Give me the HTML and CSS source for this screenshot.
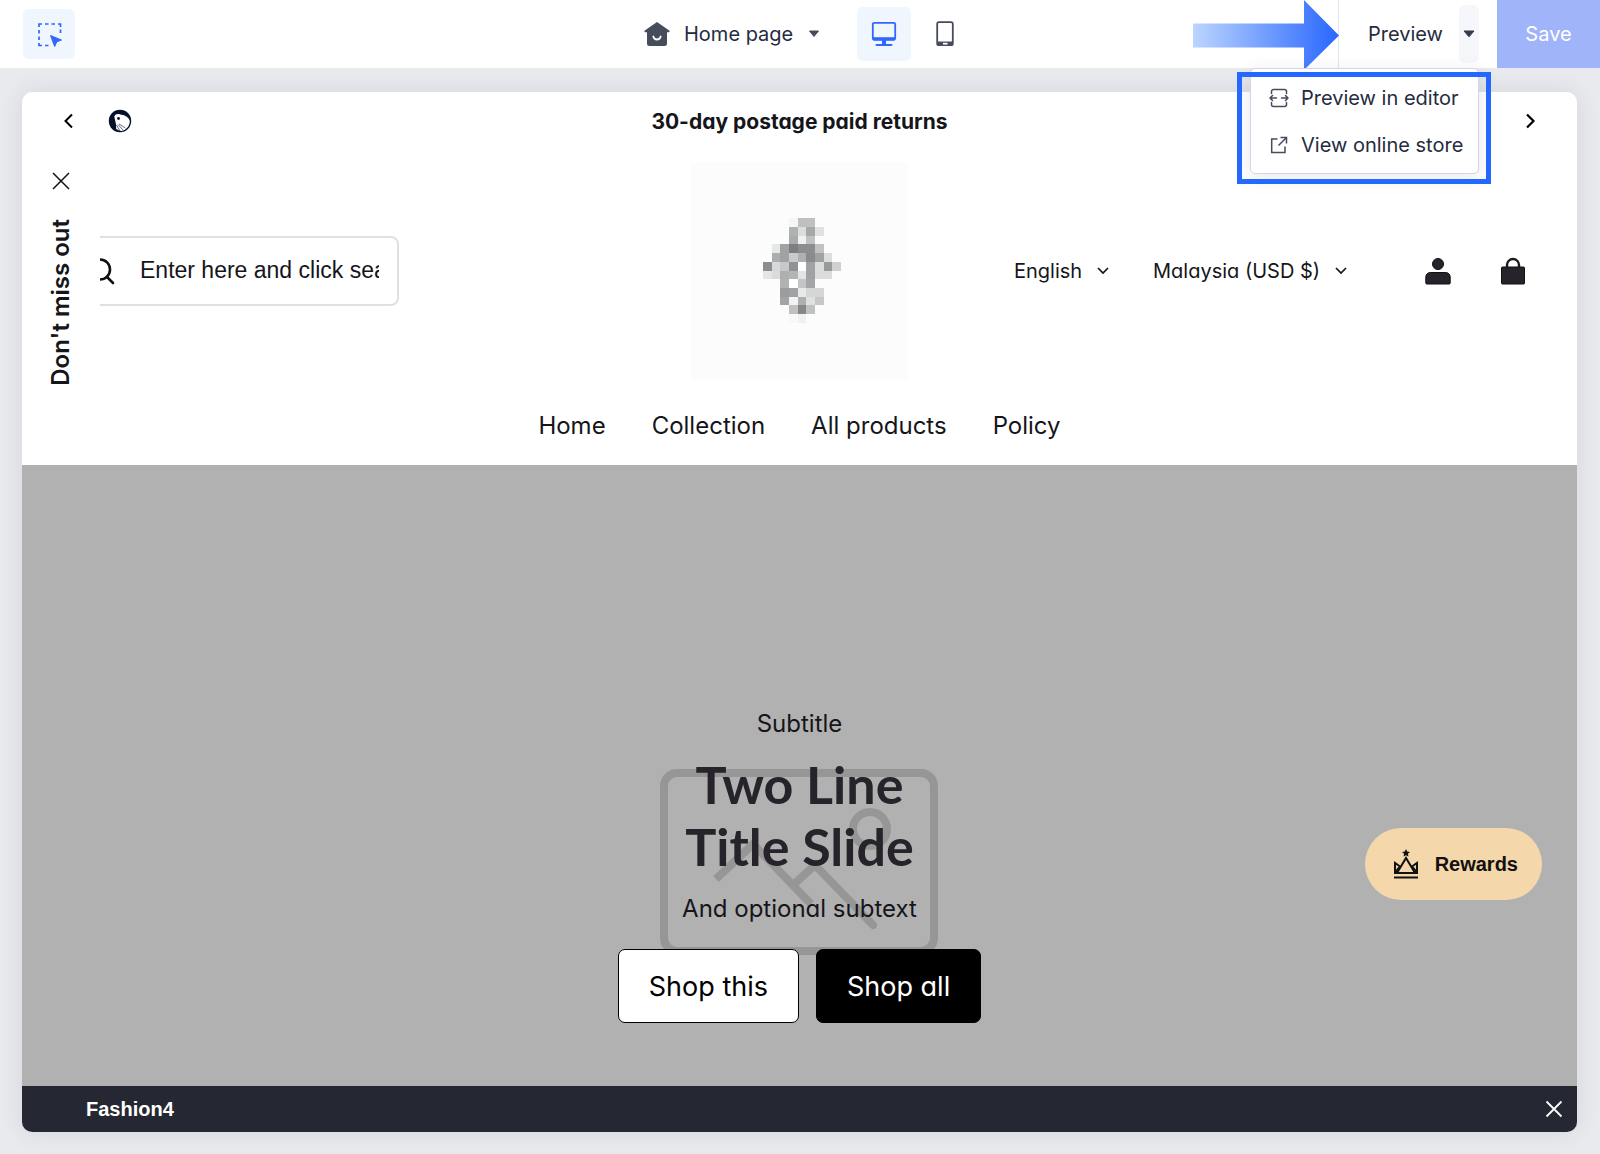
FILE: index.html
```html
<!DOCTYPE html>
<html lang="en">
<head>
<meta charset="utf-8">
<meta name="viewport" content="width=device-width, initial-scale=1">
<title>Theme editor</title>
<link rel="stylesheet" href="styles.css">
</head>
<body>
<header class="topbar">
  <div class="topbar-start">
    <button class="tool-button" type="button" aria-label="Select element">
      <svg width="25" height="25" viewBox="0 0 25 25" fill="none"><path d="M2 5V2h3M8 2h3.500M14.500 2H18M21 2h2.500v3M23.500 7.500V11M2 8v3.500M2 14.500V18M2 21v2.500h3M8 23.500h3.500" stroke="#3366ff" stroke-width="1.700"/><path d="M13.500 13.500l11 4.500-4.700 1.800L17.700 24.500z" fill="#3366ff" stroke="#3366ff" stroke-linejoin="round"/></svg>
    </button>
  </div>
  <div class="topbar-center">
    <label class="page-picker">
      <svg width="26" height="26" viewBox="0 0 26 26"><path d="M13 1L.8 9.500c-.8.800-.3 1.800.8 1.800H3V22.500A2.500 2.500 0 0 0 5.500 25h15a2.500 2.500 0 0 0 2.500-2.500V11.300h1.400c1.100 0 1.600-1 .8-1.800z" fill="#474c5c"/><path d="M9.300 15.500c1 4 6.400 4 7.400 0" fill="none" stroke="#fff" stroke-width="1.800" stroke-linecap="round"/></svg>
      <select class="page-select" aria-label="Page"><option>Home page</option></select>
      <svg class="caret" width="12" height="8" viewBox="0 0 12 8"><path d="M1.500 1h9L6 6.500z" fill="#474c5c" stroke="#474c5c" stroke-linejoin="round"/></svg>
    </label>
    <div class="devices">
      <button class="device-button device-active" type="button" aria-label="Desktop view">
        <svg width="26" height="26" viewBox="0 0 26 26" fill="none" stroke="#3366ff"><rect x="1.800" y="1.800" width="22.400" height="17" rx="1.500" stroke-width="1.800"/><path d="M2 17.700h22" stroke-width="3"/><path d="M13 18v6" stroke-width="4"/><path d="M5.500 24h15" stroke-width="2" stroke-linecap="round"/></svg>
      </button>
      <button class="device-button" type="button" aria-label="Mobile view">
        <svg width="18" height="26" viewBox="0 0 18 26" fill="none" stroke="#474c5c"><rect x="1.200" y="1.200" width="15.600" height="23" rx="1.800" stroke-width="1.800"/><path d="M1.500 22.500h15" stroke-width="4"/><path d="M7 22.700h4.500" stroke="#fff" stroke-width="1.800"/></svg>
      </button>
    </div>
  </div>
  <div class="topbar-end">
    <div class="preview-group">
      <button class="preview-button" type="button">Preview</button>
      <button class="preview-toggle" type="button" aria-label="Preview options" aria-expanded="true">
        <svg width="12" height="8" viewBox="0 0 12 8"><path d="M1 1h10L6 6.800z" fill="#333a4d" stroke="#333a4d" stroke-linejoin="round"/></svg>
      </button>
      <div class="preview-menu">
        <button class="menu-item" type="button">
          <svg width="20" height="20" viewBox="0 0 20 20" fill="none" stroke="#474c5c" stroke-width="1.500" stroke-linecap="round" stroke-linejoin="round"><path d="M2.500 5.500V3.500a2 2 0 0 1 2-2h11a2 2 0 0 1 2 2v2M2.500 14.500v2a2 2 0 0 0 2 2h11a2 2 0 0 0 2-2v-2M7.500 10H1M3.500 7.500L1 10l2.500 2.500M12.500 10H19M16.500 7.500L19 10l-2.500 2.500"/></svg>
          Preview in editor
        </button>
        <a class="menu-item" href="#store">
          <svg width="20" height="20" viewBox="0 0 20 20" fill="none" stroke="#474c5c" stroke-width="1.500"><path d="M8.500 4H2.700v13.500H16V11.500M9.500 10.500L17 3M11.500 2.500H17.500v6"/></svg>
          View online store
        </a>
        <div class="highlight"></div>
      </div>
      <svg class="arrow" width="146" height="70" viewBox="0 0 146 70"><defs><linearGradient id="arrow-fill"><stop offset="0" stop-color="#bcd4ff"/><stop offset="1" stop-color="#2867ff"/></linearGradient></defs><path d="M0 23.500h111V0l35 35.500L111 70V47.500H0z" fill="url(#arrow-fill)"/></svg>
    </div>
    <button class="save-button" type="button">Save</button>
  </div>
</header>

<main class="canvas">
  <div class="frame">
    <div class="announcement">
      <div class="announcement-start">
        <button class="icon-button" type="button" aria-label="Previous message"><svg width="12" height="18" viewBox="0 0 12 18" fill="none" stroke="#000" stroke-width="2"><path d="M10 2.500L3.500 9l6.500 6.500"/></svg></button>
        <svg width="24" height="24" viewBox="0 0 24 24"><circle cx="12" cy="12" r="11.200" fill="#06102a"/><path d="M6.300 7.500C7 4.600 11 4.400 13.500 5.800c3.500.2 6.800 2.400 8.200 5.500.6 5.500-3.200 9.700-8.200 10.700-2-.2-4-1-5.500-2.200.8-3.800-.8-7-1.700-12.300z" fill="#fff"/><circle cx="10.500" cy="9.500" r="1.400" fill="#06102a"/><path d="M8.500 16l3.500 6M10 15.500l5 5.500M11 15l6.500 4" stroke="#06102a" stroke-width=".6"/></svg>
      </div>
      <p class="announcement-text">30-day postage paid returns</p>
      <div class="announcement-end">
        <button class="icon-button" type="button" aria-label="Next message"><svg width="12" height="18" viewBox="0 0 12 18" fill="none" stroke="#000" stroke-width="2.200"><path d="M2 2.500L8.500 9 2 15.500"/></svg></button>
      </div>
    </div>

    <div class="store-header">
      <label class="search">
        <svg width="40" height="28" viewBox="0 0 40 28" fill="none" stroke="#101014" stroke-width="2.600" stroke-linecap="round"><circle cx="24" cy="12.500" r="10"/><path d="M31 20l6 6"/></svg>
        <input class="search-input" type="text" value="Enter here and click search" aria-label="Search">
      </label>
      <svg class="logo" width="217" height="217" viewBox="0 0 25 25" shape-rendering="crispEdges" role="img" aria-label="Store logo">
        <rect width="25" height="25" fill="#fcfcfc"/>
        <g transform="translate(8.300 6.500)">
          <rect x="3" y="0" width="1" height="1" fill="#f6f6f6"/><rect x="4" y="0" width="2" height="1" fill="#bfc0c0"/>
          <rect x="3" y="1" width="1" height="1" fill="#b0b2b2"/><rect x="4" y="1" width="1" height="1" fill="#dcdddd"/><rect x="5" y="1" width="1" height="1" fill="#a6a8a8"/><rect x="6" y="1" width="1" height="1" fill="#e0e1e1"/>
          <rect x="3" y="2" width="1" height="1" fill="#aaacac"/><rect x="4" y="2" width="1" height="1" fill="#f0f0f0"/><rect x="5" y="2" width="1" height="1" fill="#c0c2c2"/>
          <rect x="1" y="3" width="1" height="1" fill="#e6e7e7"/><rect x="2" y="3" width="1" height="1" fill="#a0a3a5"/><rect x="3" y="3" width="1" height="1" fill="#7b7f80"/><rect x="4" y="3" width="2" height="1" fill="#8b8d8e"/><rect x="6" y="3" width="1" height="1" fill="#c0c2c3"/>
          <rect x="1" y="4" width="1" height="1" fill="#abadae"/><rect x="2" y="4" width="1" height="1" fill="#a0a2a4"/><rect x="3" y="4" width="1" height="1" fill="#c8cacb"/><rect x="4" y="4" width="1" height="1" fill="#aeb0b1"/><rect x="5" y="4" width="1" height="1" fill="#898c8e"/><rect x="6" y="4" width="1" height="1" fill="#a0a2a3"/><rect x="7" y="4" width="1" height="1" fill="#dcdddd"/>
          <rect x="0" y="5" width="1" height="1" fill="#8b8e90"/><rect x="1" y="5" width="1" height="1" fill="#d8dad9"/><rect x="2" y="5" width="1" height="1" fill="#c6c8ca"/><rect x="3" y="5" width="1" height="1" fill="#909295"/><rect x="4" y="5" width="1" height="1" fill="#fff"/><rect x="5" y="5" width="1" height="1" fill="#a0a2a4"/><rect x="6" y="5" width="1" height="1" fill="#dcdddd"/><rect x="7" y="5" width="1" height="1" fill="#989a9c"/><rect x="8" y="5" width="1" height="1" fill="#cfd0d2"/>
          <rect x="0" y="6" width="1" height="1" fill="#e4e5e4"/><rect x="1" y="6" width="1" height="1" fill="#dadbda"/><rect x="2" y="6" width="1" height="1" fill="#adafb0"/><rect x="3" y="6" width="1" height="1" fill="#b2b4b5"/><rect x="4" y="6" width="1" height="1" fill="#e3e4e4"/><rect x="5" y="6" width="1" height="1" fill="#a0a2a4"/><rect x="6" y="6" width="2" height="1" fill="#dadcdc"/>
          <rect x="2" y="7" width="1" height="1" fill="#b0b2b4"/><rect x="3" y="7" width="1" height="1" fill="#fff"/><rect x="4" y="7" width="1" height="1" fill="#c3c5c5"/><rect x="5" y="7" width="1" height="1" fill="#a3a5a6"/>
          <rect x="2" y="8" width="1" height="1" fill="#9a9c9e"/><rect x="3" y="8" width="1" height="1" fill="#a0a2a3"/><rect x="4" y="8" width="1" height="1" fill="#e8e9e9"/><rect x="5" y="8" width="2" height="1" fill="#d5d7d7"/>
          <rect x="2" y="9" width="1" height="1" fill="#a2a4a6"/><rect x="3" y="9" width="1" height="1" fill="#f3f3f3"/><rect x="4" y="9" width="1" height="1" fill="#adb0b1"/><rect x="5" y="9" width="1" height="1" fill="#dfe0e0"/><rect x="6" y="9" width="1" height="1" fill="#c6c8c8"/>
          <rect x="3" y="10" width="1" height="1" fill="#bfc1c1"/><rect x="4" y="10" width="1" height="1" fill="#85888b"/><rect x="5" y="10" width="1" height="1" fill="#bfc1c1"/>
          <rect x="3" y="11" width="1" height="1" fill="#f9f9f9"/><rect x="4" y="11" width="1" height="1" fill="#f1f1f1"/>
        </g>
      </svg>
      <div class="store-tools">
        <label class="locale">
          <select class="locale-select" aria-label="Language"><option>English</option></select>
          <svg width="12" height="8" viewBox="0 0 12 8" fill="none" stroke="#15151a" stroke-width="1.700"><path d="M1 1l5 5 5-5"/></svg>
        </label>
        <label class="locale">
          <select class="locale-select" aria-label="Country and currency"><option>Malaysia (USD $)</option></select>
          <svg width="12" height="8" viewBox="0 0 12 8" fill="none" stroke="#15151a" stroke-width="1.700"><path d="M1 1l5 5 5-5"/></svg>
        </label>
        <a class="tool-link account" href="#account" aria-label="Account"><svg width="26" height="28" viewBox="0 0 26 28" fill="#26232b" stroke="#111"><circle cx="13" cy="7" r="5.500"/><path d="M.8 26V20a4.500 4.500 0 0 1 4.500-4.500h15.400a4.500 4.500 0 0 1 4.500 4.500v6a1 1 0 0 1-1 1H1.800a1 1 0 0 1-1-1z"/></svg></a>
        <a class="tool-link" href="#cart" aria-label="Cart"><svg width="24" height="28" viewBox="0 0 24 28"><rect x=".5" y="10" width="23" height="17" rx="1" fill="#26232b" stroke="#111"/><path d="M6 10.500V8a6 6 0 0 1 12 0v2.500" fill="none" stroke="#1b191f" stroke-width="2.400"/></svg></a>
      </div>
    </div>

    <nav class="store-nav">
      <a href="#home">Home</a>
      <a href="#collection">Collection</a>
      <a href="#products">All products</a>
      <a href="#policy">Policy</a>
    </nav>

    <aside class="side-tab">
      <button class="icon-button" type="button" aria-label="Close offer"><svg width="18" height="18" viewBox="0 0 18 18" stroke="#111" stroke-width="1.500"><path d="M1 1l16 16M17 1L1 17"/></svg></button>
      <span class="side-tab-text">Don't miss out</span>
    </aside>

    <section class="hero">
      <div class="slide">
        <svg class="placeholder" width="278" height="186" viewBox="0 0 278 186" fill="none" stroke="#969696" stroke-width="8"><rect x="4" y="4" width="270" height="178" rx="13"/><circle cx="210" cy="60" r="17"/><path d="M56 110l37-35 58 60"/><path d="M133 116l22-20 58 60" stroke-linecap="round"/></svg>
        <p class="slide-text">Subtitle</p>
        <h1 class="slide-title">Two Line<br>Title Slide</h1>
        <p class="slide-text">And optional subtext</p>
        <div class="slide-actions">
          <button class="shop-button" type="button">Shop this</button>
          <button class="shop-button shop-dark" type="button">Shop all</button>
        </div>
      </div>
      <button class="rewards" type="button">
        <svg width="26" height="30" viewBox="0 0 26 30" fill="none" stroke="#111" stroke-width="2"><path d="M4 24L13 9l9 15zM4 24H2V14l5 3.500M22 24h2V14l-5 3.500M2.500 23L7 17.500M23.500 23L19 17.500"/><path d="M1 28.500h24"/><path d="M13 0l1.200 2.600 2.800.3-2.100 1.900.6 2.800L13 6.200l-2.500 1.400.6-2.800L9 2.900l2.800-.3z" fill="#111" stroke="none"/></svg>
        Rewards
      </button>
    </section>

    <footer class="theme-bar">
      <span>Fashion4</span>
      <button class="icon-button" type="button" aria-label="Close theme bar"><svg width="18" height="18" viewBox="0 0 18 18" stroke="#fff" stroke-width="1.800"><path d="M1.500 1.500l15 15M16.500 1.500l-15 15"/></svg></button>
    </footer>
  </div>
</main>
</body>
</html>
```
FILE: styles.css
```css
* {
  box-sizing: border-box;
}

body {
  display: flex;
  flex-direction: column;
  min-height: 100vh;
  margin: 0;
  background: #e9eaee;
  color: #15151a;
  font-family: Inter, "Noto Sans", sans-serif;
}

button,
select,
input {
  margin: 0;
  padding: 0;
  border: 0;
  border-radius: 0;
  background: none;
  color: inherit;
  font: inherit;
}

select {
  appearance: none;
}

a {
  color: inherit;
  text-decoration: none;
}

p,
h1 {
  margin: 0;
}

svg {
  display: block;
  flex: none;
}

/* Editor top bar */
.topbar {
  display: grid;
  grid-template-columns: 1fr auto 1fr;
  height: 68px;
  background: #fff;
  color: #252b40;
  font-size: 20px;
}

.topbar-start,
.topbar-center,
.page-picker,
.devices {
  display: flex;
  align-items: center;
}

.topbar-start {
  padding-left: 23px;
}

.tool-button {
  display: grid;
  place-items: center;
  width: 52px;
  height: 50px;
  border-radius: 6px;
  background: #f0f6fe;
}

.topbar-center {
  gap: 37px;
}

.page-picker {
  gap: 14px;
  padding-left: 16px;
}

.devices {
  gap: 7px;
}

.device-button {
  display: grid;
  place-items: center;
  width: 54px;
  height: 54px;
  border-radius: 6px;
}

.device-active {
  background: #f0f6fe;
}

.topbar-end {
  display: flex;
  justify-content: flex-end;
}

.preview-group {
  position: relative;
  display: flex;
  align-items: center;
  gap: 16px;
  padding: 0 18px 0 29px;
  border-left: 1px solid #e4e6ee;
}

.preview-toggle {
  display: grid;
  place-items: center;
  width: 20px;
  height: 58px;
  border-radius: 6px;
  background: #f6f7fb;
}

.save-button {
  width: 103px;
  background: #a0b4fa;
  color: #fff;
}

.preview-menu {
  position: absolute;
  z-index: 3;
  top: 100%;
  right: 18px;
  width: 229px;
  padding: 5px 0;
  border: 1px solid #d3d6e2;
  border-radius: 5px;
  background: #fff;
  box-shadow: 0 4px 20px rgba(30, 40, 70, 0.1);
}

.menu-item {
  display: flex;
  align-items: center;
  gap: 12px;
  width: 100%;
  height: 47px;
  padding-left: 18px;
  white-space: nowrap;
}

.highlight {
  position: absolute;
  inset: 3px -13px -11px -14px;
  border: 5px solid #2468ff;
  pointer-events: none;
}

.arrow {
  position: absolute;
  top: 0;
  right: 100%;
  z-index: 2;
}

/* Store preview */
.canvas {
  display: flex;
  flex: 1;
  padding: 24px 23px 22px 22px;
}

.frame {
  position: relative;
  display: flex;
  flex: 1;
  flex-direction: column;
  overflow: hidden;
  border-radius: 10px;
  background: #fff;
  box-shadow: 0 0 24px rgba(40, 50, 80, 0.1);
  font-feature-settings: "cv11";
}

.icon-button {
  display: grid;
  place-items: center;
}

.announcement {
  display: grid;
  grid-template-columns: 1fr auto 1fr;
  align-items: center;
  height: 58px;
  padding: 0 40px;
}

.announcement-start {
  display: flex;
  align-items: center;
  gap: 34px;
}

.announcement-end {
  display: flex;
  justify-content: flex-end;
}

.announcement-text {
  font-size: 21px;
  font-weight: 700;
}

.store-header {
  display: grid;
  grid-template-columns: 1fr auto 1fr;
  align-items: center;
  padding: 12px 52px 0;
}

.search {
  display: flex;
  align-items: center;
  gap: 24px;
  width: 325px;
  height: 70px;
  padding-right: 18px;
  border: 2px solid #e0e0e0;
  border-radius: 8px;
}

.search-input {
  flex: 1;
  min-width: 0;
  font-family: "Liberation Sans", sans-serif;
  font-size: 23px;
}

.store-tools,
.locale {
  display: flex;
  align-items: center;
}

.store-tools {
  justify-content: flex-end;
  gap: 44px;
}

.locale {
  gap: 14px;
  font-size: 20px;
}

.account {
  margin: 0 6px 0 34px;
}

.store-nav {
  display: flex;
  justify-content: center;
  gap: 46px;
  padding: 32px 0 24px;
  font-size: 24px;
  line-height: 30px;
}

.side-tab {
  position: absolute;
  top: 58px;
  left: 0;
  display: flex;
  flex-direction: column;
  align-items: center;
  gap: 29px;
  width: 78px;
  padding: 22px 0 15px;
  background: #fff;
}

.side-tab-text {
  transform: rotate(180deg);
  writing-mode: vertical-rl;
  font-size: 24px;
  font-weight: 600;
  line-height: 28px;
  font-feature-settings: normal;
}

.hero {
  position: relative;
  display: flex;
  flex: 1;
  align-items: flex-end;
  justify-content: center;
  min-height: 480px;
  padding-bottom: 63px;
  background: #b1b1b1;
}

.slide {
  position: relative;
  display: flex;
  flex-direction: column;
  align-items: center;
}

.slide > * {
  position: relative;
}

.slide .placeholder {
  position: absolute;
  right: 0;
  bottom: 68px;
  left: 0;
  margin: 0 auto;
}

.slide-text {
  font-size: 24px;
  line-height: 32px;
}

.slide-title {
  margin: 13px 0 16px;
  color: #26232b;
  font-family: Lato, sans-serif;
  font-size: 52px;
  font-weight: 700;
  line-height: 62px;
  text-align: center;
}

.slide-actions {
  display: flex;
  gap: 17px;
  margin-top: 24px;
}

.shop-button {
  height: 74px;
  padding: 0 30px;
  border: 1px solid #000;
  border-radius: 7px;
  background: #fff;
  color: #000;
  font-size: 27px;
}

.shop-dark {
  background: #000;
  color: #fff;
}

.rewards {
  position: absolute;
  right: 35px;
  bottom: 186px;
  display: flex;
  align-items: center;
  gap: 16px;
  height: 72px;
  padding: 0 24px 0 28px;
  border-radius: 36px;
  background: #f4d7ab;
  color: #111;
  font-family: "Liberation Sans", sans-serif;
  font-size: 20px;
  font-weight: 700;
}

.theme-bar {
  display: flex;
  align-items: center;
  justify-content: space-between;
  height: 46px;
  padding: 0 14px 0 64px;
  background: #252733;
  color: #fff;
  font-family: "Liberation Sans", sans-serif;
  font-size: 20px;
  font-weight: 700;
}
```
